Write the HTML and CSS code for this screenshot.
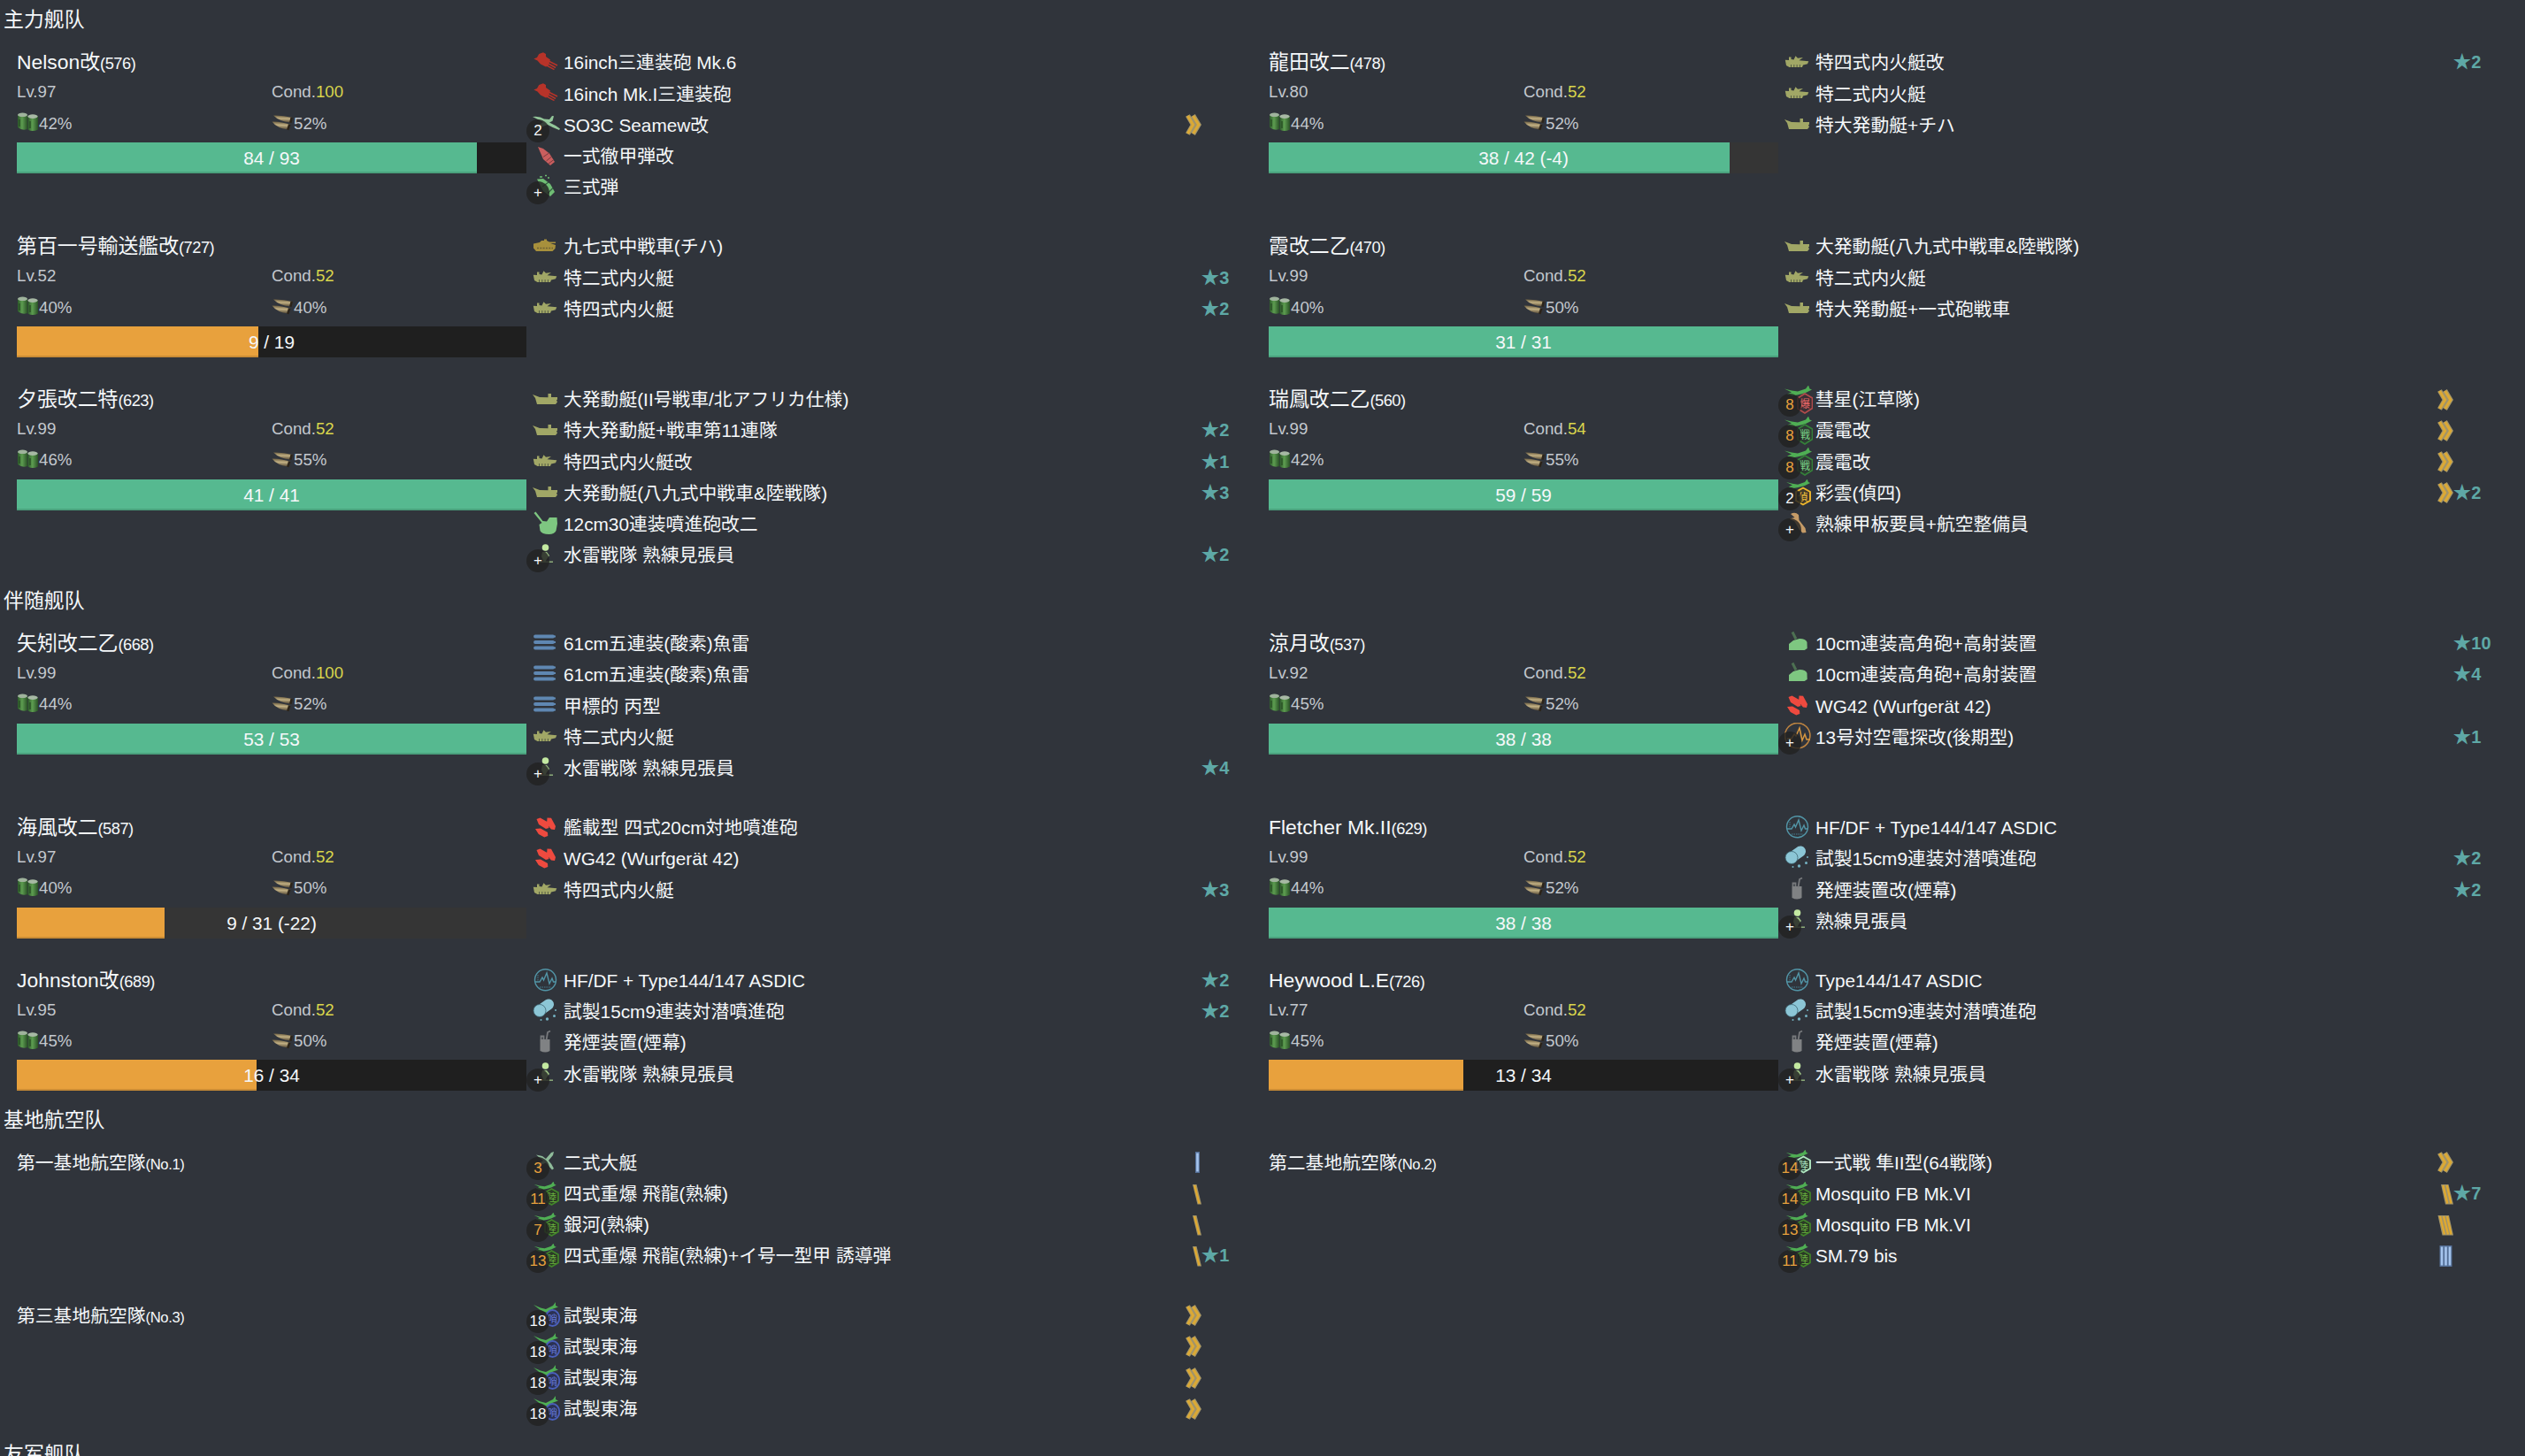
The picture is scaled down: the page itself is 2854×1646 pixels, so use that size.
FILE: index.html
```html
<!DOCTYPE html>
<html lang="ja">
<head>
<meta charset="utf-8">
<title>Fleet</title>
<link rel="stylesheet" href="styles.css">
</head>
<body>
<svg class="defs" width="0" height="0">
  <defs>
    <linearGradient id="g-can" x1="0" x2="1"><stop offset="0" stop-color="#2c5a2a"/><stop offset=".45" stop-color="#5d9d50"/><stop offset="1" stop-color="#2a5227"/></linearGradient>
    <linearGradient id="g-shell" x1=".1" y1="0" x2="0" y2="1"><stop offset="0" stop-color="#6d5f42"/><stop offset=".4" stop-color="#c2b083"/><stop offset="1" stop-color="#43392a"/></linearGradient>
  </defs>
  <symbol id="fuel" viewBox="0 0 25 22">
    <path d="M1 3v14q5 4 11 2V3z" fill="url(#g-can)"/><ellipse cx="6.5" cy="2.8" rx="5.5" ry="2.3" fill="#9fb39c"/>
    <path d="M12.500 5v14.500q5 3 11.500 0V5z" fill="url(#g-can)"/><ellipse cx="18" cy="4.600" rx="5.600" ry="2.400" fill="#a7b9a4"/>
    <path d="M3 8v8M15 10v8" stroke="#234820" stroke-width="1.200"/>
  </symbol>
  <symbol id="ammo" viewBox="0 0 25 22">
    <path d="M2 3.500Q12 3 23.500 6L21.500 11.500Q9 10.500 2 3.500z" fill="url(#g-shell)"/><path d="M.5 10.500Q10 10 21 14L19 19.500Q6 18 .5 10.500z" fill="url(#g-shell)"/>
    <path d="M21.500 5.500l2.500.600-1.500 6-2.500-.500zM19 13.300l2.500.900-2 6-2.500-.700z" fill="#2c241a"/>
  </symbol>
  <symbol id="gun" viewBox="0 0 32 32">
    <path d="M12 4.300 15 6v3l5 3.500-2.500 7L15 20.500 9 17.500 5.500 13.500 1.300 11.500 5 10 7.200 6z" fill="#b73329"/>
    <path d="M18 14l10 5M17 16.500l9 5M15 18.500l9.500 5.200" stroke="#b73329" stroke-width="1.500"/>
  </symbol>
  <symbol id="seaplane" viewBox="0 0 32 32">
    <path d="M0 7q8-1 13 2.500l6 .500 3-4 2 .300-1.500 5.500L19 13.500q7 3 12 7l-1 1.500q-8-3-13-6L6 20l-2-1 8-6q-6-3-12-6z" fill="#93c79a"/>
  </symbol>
  <symbol id="flyingboat" viewBox="0 0 32 32">
    <path d="M4 7.500l7 1.500 4 3 6-7 3-1-1 4-5 6q4 4 6 9l-2 1.500-7-8-9 4-1-1.500 7-5q-4-3-8-6.500z" fill="#8fbb9a"/>
  </symbol>
  <symbol id="apshell" viewBox="0 0 32 32">
    <path d="M6 5l6 2 7 5.500 6 9.500-5 4-8-7z" fill="#c95e5e"/><path d="M12 16.500l6.500-4.500M15.500 21l6-5M18 24l6-4.500" stroke="#7a3b3f" stroke-width="1"/>
  </symbol>
  <symbol id="aashell" viewBox="0 0 32 32">
    <path d="M5 6.500l7-.500 8 6 5 9-5 5-8-6z" fill="#6fbd74"/><path d="M11 15l7-5M17 22.500l6-6" stroke="#346040" stroke-width="1.200"/>
    <path d="M8 4h3M14 2.500h2M17 5h2" stroke="#6fbd74" stroke-width="1.600"/>
  </symbol>
  <symbol id="tank" viewBox="0 0 32 32">
    <path d="M1 12.500l7-1.500 2-2h3V7.500h3V9l3 1.500h7v1.500h-6l6 2-.500 4-3 3H4l-3-3.500z" fill="#a7903c"/><path d="M5 17.500h18" stroke="#6d6134" stroke-width="1.500" stroke-dasharray="2 1.300"/>
  </symbol>
  <symbol id="amphib" viewBox="0 0 32 32">
    <path d="M.8 12.700 5 13V9.500h2.500V12l3 .500 2-4.200 2.500 2.500 6-.800-4.500 3.200 10.800 1-1.300 3-5 1.300-1 2.500H5.500L2 19z" fill="#a1a766"/><path d="M7 19.500h12" stroke="#555d45" stroke-width="2.800" stroke-dasharray="1 2.300"/>
  </symbol>
  <symbol id="landing" viewBox="0 0 32 32">
    <path d="M0 10l8 3 9.500.300V9H21v4h7v2.500l-1 1 1 2-2 2.500H5L3 14z" fill="#a1a766"/>
  </symbol>
  <symbol id="rocket" viewBox="0 0 32 32">
    <path d="M1.500 4l2-1.500L11.500 13l4.500.500 3-4.500h8.500l.500 7-1.500 8q-2 4-8 4-8 0-10-4l-1-7 3-2z" fill="#7ec781"/>
  </symbol>
  <symbol id="crew" viewBox="0 0 32 32">
    <circle cx="14.500" cy="7" r="3.800" fill="#c3e9a1"/><path d="M11 12h5l3 4-3 4-1.500 3h-2L10 17z" fill="#9cc184"/><path d="M6 23.200h17" stroke="#8fae7b" stroke-width="1.500"/>
  </symbol>
  <symbol id="torpedo" viewBox="0 0 32 32">
    <path d="M3 7.500h20M3 14h20M3 20.500h20" stroke="#5f87b2" stroke-width="3.800" stroke-linecap="round"/><path d="M22 7.500h4M22 14h4M22 20.500h4" stroke="#5f87b2" stroke-width="2"/>
  </symbol>
  <symbol id="highangle" viewBox="0 0 32 32">
    <path d="M9 2.500l4 8" stroke="#4d7052" stroke-width="3"/><path d="M5 16l5-4 7-2q7 0 8.500 4l.200 7-3 2H5z" fill="#7ec781"/>
  </symbol>
  <symbol id="wurf" viewBox="0 0 32 32">
    <path d="M4.500 6l4-1.500 8 4.500 2 7-3.500 1-8-5zM16.500 4.500 21 4.800l5 9.200-1 4-4-.500-5-6zM3 17l6-.500 8 4.500.300 4-4 1.500-6.500-3.500z" fill="#ee4a3f"/>
  </symbol>
  <symbol id="radar" viewBox="0 0 32 32">
    <circle cx="14.700" cy="14.600" r="14.200" fill="none" stroke="#bd8441" stroke-width="1.600"/><path d="M3 18h5l3-5 2 2 4-9 3 14 3-7 2 6h4" fill="none" stroke="#d8973f" stroke-width="1.500"/>
  </symbol>
  <symbol id="sonar" viewBox="0 0 32 32">
    <circle cx="14.500" cy="14.800" r="12" fill="none" stroke="#5295a7" stroke-width="1.400"/><path d="M3 17h5l3-5 1.500 3L16 7l3 12 3-6 1.500 4H26" fill="none" stroke="#5295a7" stroke-width="1.400"/><path d="M8 23h13M6 9v7" stroke="#3e6675" stroke-width="1.400" stroke-dasharray="1.500 1"/>
  </symbol>
  <symbol id="depth" viewBox="0 0 32 32">
    <path d="M8 14.500 18 7.500" stroke="#8cc6d6" stroke-width="12" stroke-linecap="round"/><circle cx="8" cy="14.500" r="7" fill="#8cc6d6" stroke="#3c6370" stroke-width=".8"/>
    <g fill="#75b2c3"><circle cx="16.500" cy="24" r="1.700"/><circle cx="24.500" cy="20.500" r="1.500"/><circle cx="9.500" cy="25" r="1"/><circle cx="26" cy="14" r="1"/></g>
  </symbol>
  <symbol id="smoke" viewBox="0 0 32 32">
    <path d="M8.500 12h11v13q-5 3-11 0z" fill="#808284"/><path d="M15.500 13l1.500-9 3-1.500M9.500 12V8.500h3V12" fill="none" stroke="#77797c" stroke-width="1.800"/>
  </symbol>
  <symbol id="wrench" viewBox="0 0 32 32">
    <path d="M7 5q5-3 9 1l.500 6 7 9 1 5-4 .500-4-4-5-9-6-3 6-1.500z" fill="#c59b67"/>
  </symbol>
  <symbol id="jet" viewBox="0 0 32 32">
    <path d="M0 3.500l8 2 7 1 9-3 3-4 1.500 4 2.500 1-7 3.500-5 1.500L9 11.500 3 9.500l5-2z" fill="#4fae54"/>
  </symbol>
  <symbol id="bomber" viewBox="0 0 32 32">
    <use href="#jet"/><path d="M23 9l8.500 5v11.500L23 31l-8-5V14z" fill="#3a2f34" stroke="#b14b4b" stroke-width="1.700"/>
  </symbol>
  <symbol id="fighter" viewBox="0 0 32 32">
    <use href="#jet"/><path d="M23 9l8.500 5v11.500L23 31l-8-5V14z" fill="#2d3a33" stroke="#35803a" stroke-width="1.700"/>
  </symbol>
  <symbol id="recon" viewBox="0 0 32 32">
    <use href="#jet" x="2" y="1" width="28" height="28"/><path d="M21 10.500l8 4.500v10L21 29.500 13 25V15z" fill="#423b2a" stroke="#efb72d" stroke-width="1.900"/>
  </symbol>
  <symbol id="landplane" viewBox="0 0 32 32">
    <use href="#jet" x="1.500" y="2" width="26" height="26"/><path d="M21.500 10l7.500 4.200v9.300L21.500 28 14 23.500v-9.300z" fill="#2b3b26" stroke="#42852a" stroke-width="1.700"/>
  </symbol>
  <symbol id="landfighter" viewBox="0 0 32 32">
    <use href="#jet" x="1.500" y="2" width="26" height="26"/><path d="M21.500 9.500l7.500 4.200v9.300L21.500 27.500 14 23v-9.300z" fill="#2f4438" stroke="#b0e8c2" stroke-width="1.900"/>
  </symbol>
  <symbol id="patrol" viewBox="0 0 32 32">
    <path d="M1 4l8 3.500 6 1.500 8-4 3-4v4l3 1.500-7 2.500-6 4-8-3.500z" fill="#4fae54"/><ellipse cx="22.500" cy="19" rx="7.800" ry="9" fill="#2b3153" stroke="#4a5fbb" stroke-width="1.900"/>
  </symbol>
  <symbol id="p7" viewBox="0 0 18 24">
    <g fill="none"><path d="M2.500 1.500 8.500 12 2.500 22.500M8.500 1.500 14.800 12 8.500 22.500" stroke="#a1946a" stroke-width="5.500"/><path d="M2.500 2 8.500 12 2.500 22M8.700 2 14.800 12 8.700 22" stroke="#dba935" stroke-width="3.200"/></g>
  </symbol>
  <symbol id="p6" viewBox="0 0 18 24">
    <path d="M.5 1h12.500l5 22.500H5.500z" fill="#a1946a"/><path d="M3 2l5 20.500M7 2l5 20.500M11 2l4.500 20.500" stroke="#e0a92f" stroke-width="2.300"/>
  </symbol>
  <symbol id="p5" viewBox="0 0 18 24">
    <path d="M4 1h8.500l5.500 22.500H9z" fill="#a1946a"/><path d="M6.500 2l4.800 20.500M10.700 2l4.800 20.500" stroke="#e0a92f" stroke-width="2.300"/>
  </symbol>
  <symbol id="p4" viewBox="0 0 18 24">
    <path d="M8 1h4.500l5.500 22.500h-4.500z" fill="#a1946a"/><path d="M10.200 2l5.300 20.500" stroke="#e0a92f" stroke-width="2.300"/>
  </symbol>
  <symbol id="p3" viewBox="0 0 18 24">
    <path d="M2.500 0h14v24h-14z" fill="#546f97"/><path d="M5 1.500v21M9.500 1.500v21M14 1.500v21" stroke="#a5c5ee" stroke-width="2.600"/>
  </symbol>
  <symbol id="p1" viewBox="0 0 18 24">
    <path d="M11 0h5v24h-5z" fill="#546f97"/><path d="M13.500 1.500v21" stroke="#a5c5ee" stroke-width="2.600"/>
  </symbol>
</svg>

<main class="fleets">
<h2 class="title">主力舰队</h2>
<section class="grid">
  <article class="ship">
    <div class="info"><h3 class="who">Nelson改<small>(576)</small></h3>
      <div class="pair stat"><span>Lv.97</span><span>Cond.<i>100</i></span></div>
      <div class="pair supply"><span><svg><use href="#fuel"/></svg>42%</span><span><svg><use href="#ammo"/></svg>52%</span></div>
      <div class="hp"><div class="fill green" style="width:90.32%"></div><span>84 / 93</span></div></div>
    <ul class="items">
      <li><span class="icon"><svg><use href="#gun"/></svg></span><span class="name">16inch三連装砲 Mk.6</span></li>
      <li><span class="icon"><svg><use href="#gun"/></svg></span><span class="name">16inch Mk.I三連装砲</span></li>
      <li><span class="icon"><svg><use href="#seaplane"/></svg><b>2</b></span><span class="name">SO3C Seamew改</span><svg class="prof"><use href="#p7"/></svg></li>
      <li><span class="icon"><svg><use href="#apshell"/></svg></span><span class="name">一式徹甲弾改</span></li>
      <li><span class="icon"><svg><use href="#aashell"/></svg><b>+</b></span><span class="name">三式弾</span></li>
    </ul>
  </article>
  <article class="ship">
    <div class="info"><h3 class="who">龍田改二<small>(478)</small></h3>
      <div class="pair stat"><span>Lv.80</span><span>Cond.<i>52</i></span></div>
      <div class="pair supply"><span><svg><use href="#fuel"/></svg>44%</span><span><svg><use href="#ammo"/></svg>52%</span></div>
      <div class="hp hurt"><div class="fill green" style="width:90.48%"></div><span>38 / 42 (-4)</span></div></div>
    <ul class="items">
      <li><span class="icon"><svg><use href="#amphib"/></svg></span><span class="name">特四式内火艇改</span><span class="star">2</span></li>
      <li><span class="icon"><svg><use href="#amphib"/></svg></span><span class="name">特二式内火艇</span></li>
      <li><span class="icon"><svg><use href="#landing"/></svg></span><span class="name">特大発動艇+チハ</span></li>
    </ul>
  </article>
  <article class="ship">
    <div class="info"><h3 class="who">第百一号輸送艦改<small>(727)</small></h3>
      <div class="pair stat"><span>Lv.52</span><span>Cond.<i>52</i></span></div>
      <div class="pair supply"><span><svg><use href="#fuel"/></svg>40%</span><span><svg><use href="#ammo"/></svg>40%</span></div>
      <div class="hp"><div class="fill orange" style="width:47.37%"></div><span>9 / 19</span></div></div>
    <ul class="items">
      <li><span class="icon"><svg><use href="#tank"/></svg></span><span class="name">九七式中戦車(チハ)</span></li>
      <li><span class="icon"><svg><use href="#amphib"/></svg></span><span class="name">特二式内火艇</span><span class="star">3</span></li>
      <li><span class="icon"><svg><use href="#amphib"/></svg></span><span class="name">特四式内火艇</span><span class="star">2</span></li>
    </ul>
  </article>
  <article class="ship">
    <div class="info"><h3 class="who">霞改二乙<small>(470)</small></h3>
      <div class="pair stat"><span>Lv.99</span><span>Cond.<i>52</i></span></div>
      <div class="pair supply"><span><svg><use href="#fuel"/></svg>40%</span><span><svg><use href="#ammo"/></svg>50%</span></div>
      <div class="hp"><div class="fill green" style="width:100%"></div><span>31 / 31</span></div></div>
    <ul class="items">
      <li><span class="icon"><svg><use href="#landing"/></svg></span><span class="name">大発動艇(八九式中戦車&amp;陸戦隊)</span></li>
      <li><span class="icon"><svg><use href="#amphib"/></svg></span><span class="name">特二式内火艇</span></li>
      <li><span class="icon"><svg><use href="#landing"/></svg></span><span class="name">特大発動艇+一式砲戦車</span></li>
    </ul>
  </article>
  <article class="ship">
    <div class="info"><h3 class="who">夕張改二特<small>(623)</small></h3>
      <div class="pair stat"><span>Lv.99</span><span>Cond.<i>52</i></span></div>
      <div class="pair supply"><span><svg><use href="#fuel"/></svg>46%</span><span><svg><use href="#ammo"/></svg>55%</span></div>
      <div class="hp"><div class="fill green" style="width:100%"></div><span>41 / 41</span></div></div>
    <ul class="items">
      <li><span class="icon"><svg><use href="#landing"/></svg></span><span class="name">大発動艇(II号戦車/北アフリカ仕様)</span></li>
      <li><span class="icon"><svg><use href="#landing"/></svg></span><span class="name">特大発動艇+戦車第11連隊</span><span class="star">2</span></li>
      <li><span class="icon"><svg><use href="#amphib"/></svg></span><span class="name">特四式内火艇改</span><span class="star">1</span></li>
      <li><span class="icon"><svg><use href="#landing"/></svg></span><span class="name">大発動艇(八九式中戦車&amp;陸戦隊)</span><span class="star">3</span></li>
      <li><span class="icon"><svg><use href="#rocket"/></svg></span><span class="name">12cm30連装噴進砲改二</span></li>
      <li><span class="icon"><svg><use href="#crew"/></svg><b>+</b></span><span class="name">水雷戦隊 熟練見張員</span><span class="star">2</span></li>
    </ul>
  </article>
  <article class="ship">
    <div class="info"><h3 class="who">瑞鳳改二乙<small>(560)</small></h3>
      <div class="pair stat"><span>Lv.99</span><span>Cond.<i>54</i></span></div>
      <div class="pair supply"><span><svg><use href="#fuel"/></svg>42%</span><span><svg><use href="#ammo"/></svg>55%</span></div>
      <div class="hp"><div class="fill green" style="width:100%"></div><span>59 / 59</span></div></div>
    <ul class="items">
      <li><span class="icon"><svg><use href="#bomber"/></svg><em class="tag bomb">爆</em><b class="low">8</b></span><span class="name">彗星(江草隊)</span><svg class="prof"><use href="#p7"/></svg></li>
      <li><span class="icon"><svg><use href="#fighter"/></svg><em class="tag fight">戦</em><b class="low">8</b></span><span class="name">震電改</span><svg class="prof"><use href="#p7"/></svg></li>
      <li><span class="icon"><svg><use href="#fighter"/></svg><em class="tag fight">戦</em><b class="low">8</b></span><span class="name">震電改</span><svg class="prof"><use href="#p7"/></svg></li>
      <li><span class="icon"><svg><use href="#recon"/></svg><em class="tag scout">偵</em><b>2</b></span><span class="name">彩雲(偵四)</span><svg class="prof"><use href="#p7"/></svg><span class="star">2</span></li>
      <li><span class="icon"><svg><use href="#wrench"/></svg><b>+</b></span><span class="name">熟練甲板要員+航空整備員</span></li>
    </ul>
  </article>
</section>

<h2 class="title">伴随舰队</h2>
<section class="grid">
  <article class="ship">
    <div class="info"><h3 class="who">矢矧改二乙<small>(668)</small></h3>
      <div class="pair stat"><span>Lv.99</span><span>Cond.<i>100</i></span></div>
      <div class="pair supply"><span><svg><use href="#fuel"/></svg>44%</span><span><svg><use href="#ammo"/></svg>52%</span></div>
      <div class="hp"><div class="fill green" style="width:100%"></div><span>53 / 53</span></div></div>
    <ul class="items">
      <li><span class="icon"><svg><use href="#torpedo"/></svg></span><span class="name">61cm五連装(酸素)魚雷</span></li>
      <li><span class="icon"><svg><use href="#torpedo"/></svg></span><span class="name">61cm五連装(酸素)魚雷</span></li>
      <li><span class="icon"><svg><use href="#torpedo"/></svg></span><span class="name">甲標的 丙型</span></li>
      <li><span class="icon"><svg><use href="#amphib"/></svg></span><span class="name">特二式内火艇</span></li>
      <li><span class="icon"><svg><use href="#crew"/></svg><b>+</b></span><span class="name">水雷戦隊 熟練見張員</span><span class="star">4</span></li>
    </ul>
  </article>
  <article class="ship">
    <div class="info"><h3 class="who">涼月改<small>(537)</small></h3>
      <div class="pair stat"><span>Lv.92</span><span>Cond.<i>52</i></span></div>
      <div class="pair supply"><span><svg><use href="#fuel"/></svg>45%</span><span><svg><use href="#ammo"/></svg>52%</span></div>
      <div class="hp"><div class="fill green" style="width:100%"></div><span>38 / 38</span></div></div>
    <ul class="items">
      <li><span class="icon"><svg><use href="#highangle"/></svg></span><span class="name">10cm連装高角砲+高射装置</span><span class="star">10</span></li>
      <li><span class="icon"><svg><use href="#highangle"/></svg></span><span class="name">10cm連装高角砲+高射装置</span><span class="star">4</span></li>
      <li><span class="icon"><svg><use href="#wurf"/></svg></span><span class="name">WG42 (Wurfgerät 42)</span></li>
      <li><span class="icon"><svg><use href="#radar"/></svg><b>+</b></span><span class="name">13号対空電探改(後期型)</span><span class="star">1</span></li>
    </ul>
  </article>
  <article class="ship">
    <div class="info"><h3 class="who">海風改二<small>(587)</small></h3>
      <div class="pair stat"><span>Lv.97</span><span>Cond.<i>52</i></span></div>
      <div class="pair supply"><span><svg><use href="#fuel"/></svg>40%</span><span><svg><use href="#ammo"/></svg>50%</span></div>
      <div class="hp hurt"><div class="fill orange" style="width:29.03%"></div><span>9 / 31 (-22)</span></div></div>
    <ul class="items">
      <li><span class="icon"><svg><use href="#wurf"/></svg></span><span class="name">艦載型 四式20cm対地噴進砲</span></li>
      <li><span class="icon"><svg><use href="#wurf"/></svg></span><span class="name">WG42 (Wurfgerät 42)</span></li>
      <li><span class="icon"><svg><use href="#amphib"/></svg></span><span class="name">特四式内火艇</span><span class="star">3</span></li>
    </ul>
  </article>
  <article class="ship">
    <div class="info"><h3 class="who">Fletcher Mk.II<small>(629)</small></h3>
      <div class="pair stat"><span>Lv.99</span><span>Cond.<i>52</i></span></div>
      <div class="pair supply"><span><svg><use href="#fuel"/></svg>44%</span><span><svg><use href="#ammo"/></svg>52%</span></div>
      <div class="hp"><div class="fill green" style="width:100%"></div><span>38 / 38</span></div></div>
    <ul class="items">
      <li><span class="icon"><svg><use href="#sonar"/></svg></span><span class="name">HF/DF + Type144/147 ASDIC</span></li>
      <li><span class="icon"><svg><use href="#depth"/></svg></span><span class="name">試製15cm9連装対潜噴進砲</span><span class="star">2</span></li>
      <li><span class="icon"><svg><use href="#smoke"/></svg></span><span class="name">発煙装置改(煙幕)</span><span class="star">2</span></li>
      <li><span class="icon"><svg><use href="#crew"/></svg><b>+</b></span><span class="name">熟練見張員</span></li>
    </ul>
  </article>
  <article class="ship">
    <div class="info"><h3 class="who">Johnston改<small>(689)</small></h3>
      <div class="pair stat"><span>Lv.95</span><span>Cond.<i>52</i></span></div>
      <div class="pair supply"><span><svg><use href="#fuel"/></svg>45%</span><span><svg><use href="#ammo"/></svg>50%</span></div>
      <div class="hp"><div class="fill orange" style="width:47.06%"></div><span>16 / 34</span></div></div>
    <ul class="items">
      <li><span class="icon"><svg><use href="#sonar"/></svg></span><span class="name">HF/DF + Type144/147 ASDIC</span><span class="star">2</span></li>
      <li><span class="icon"><svg><use href="#depth"/></svg></span><span class="name">試製15cm9連装対潜噴進砲</span><span class="star">2</span></li>
      <li><span class="icon"><svg><use href="#smoke"/></svg></span><span class="name">発煙装置(煙幕)</span></li>
      <li><span class="icon"><svg><use href="#crew"/></svg><b>+</b></span><span class="name">水雷戦隊 熟練見張員</span></li>
    </ul>
  </article>
  <article class="ship">
    <div class="info"><h3 class="who">Heywood L.E<small>(726)</small></h3>
      <div class="pair stat"><span>Lv.77</span><span>Cond.<i>52</i></span></div>
      <div class="pair supply"><span><svg><use href="#fuel"/></svg>45%</span><span><svg><use href="#ammo"/></svg>50%</span></div>
      <div class="hp"><div class="fill orange" style="width:38.24%"></div><span>13 / 34</span></div></div>
    <ul class="items">
      <li><span class="icon"><svg><use href="#sonar"/></svg></span><span class="name">Type144/147 ASDIC</span></li>
      <li><span class="icon"><svg><use href="#depth"/></svg></span><span class="name">試製15cm9連装対潜噴進砲</span></li>
      <li><span class="icon"><svg><use href="#smoke"/></svg></span><span class="name">発煙装置(煙幕)</span></li>
      <li><span class="icon"><svg><use href="#crew"/></svg><b>+</b></span><span class="name">水雷戦隊 熟練見張員</span></li>
    </ul>
  </article>
</section>

<h2 class="title">基地航空队</h2>
<section class="grid">
  <article class="ship">
    <div class="info"><h3 class="who base">第一基地航空隊<small>(No.1)</small></h3></div>
    <ul class="items">
      <li><span class="icon"><svg><use href="#flyingboat"/></svg><b class="low">3</b></span><span class="name">二式大艇</span><svg class="prof"><use href="#p1"/></svg></li>
      <li><span class="icon"><svg><use href="#landplane"/></svg><em class="tag land">陸</em><b class="low">11</b></span><span class="name">四式重爆 飛龍(熟練)</span><svg class="prof"><use href="#p4"/></svg></li>
      <li><span class="icon"><svg><use href="#landplane"/></svg><em class="tag land">陸</em><b class="low">7</b></span><span class="name">銀河(熟練)</span><svg class="prof"><use href="#p4"/></svg></li>
      <li><span class="icon"><svg><use href="#landplane"/></svg><em class="tag land">陸</em><b class="low">13</b></span><span class="name">四式重爆 飛龍(熟練)+イ号一型甲 誘導弾</span><svg class="prof"><use href="#p4"/></svg><span class="star">1</span></li>
    </ul>
  </article>
  <article class="ship">
    <div class="info"><h3 class="who base">第二基地航空隊<small>(No.2)</small></h3></div>
    <ul class="items">
      <li><span class="icon"><svg><use href="#landfighter"/></svg><em class="tag land pale">陸</em><b class="low">14</b></span><span class="name">一式戦 隼II型(64戦隊)</span><svg class="prof"><use href="#p7"/></svg></li>
      <li><span class="icon"><svg><use href="#landplane"/></svg><em class="tag land">陸</em><b class="low">14</b></span><span class="name">Mosquito FB Mk.VI</span><svg class="prof"><use href="#p5"/></svg><span class="star">7</span></li>
      <li><span class="icon"><svg><use href="#landplane"/></svg><em class="tag land">陸</em><b class="low">13</b></span><span class="name">Mosquito FB Mk.VI</span><svg class="prof"><use href="#p6"/></svg></li>
      <li><span class="icon"><svg><use href="#landplane"/></svg><em class="tag land">陸</em><b class="low">11</b></span><span class="name">SM.79 bis</span><svg class="prof"><use href="#p3"/></svg></li>
    </ul>
  </article>
  <article class="ship">
    <div class="info"><h3 class="who base">第三基地航空隊<small>(No.3)</small></h3></div>
    <ul class="items">
      <li><span class="icon"><svg><use href="#patrol"/></svg><em class="tag watch">哨</em><b>18</b></span><span class="name">試製東海</span><svg class="prof"><use href="#p7"/></svg></li>
      <li><span class="icon"><svg><use href="#patrol"/></svg><em class="tag watch">哨</em><b>18</b></span><span class="name">試製東海</span><svg class="prof"><use href="#p7"/></svg></li>
      <li><span class="icon"><svg><use href="#patrol"/></svg><em class="tag watch">哨</em><b>18</b></span><span class="name">試製東海</span><svg class="prof"><use href="#p7"/></svg></li>
      <li><span class="icon"><svg><use href="#patrol"/></svg><em class="tag watch">哨</em><b>18</b></span><span class="name">試製東海</span><svg class="prof"><use href="#p7"/></svg></li>
    </ul>
  </article>
</section>
<h2 class="title">友军舰队</h2>
</main>
</body>
</html>
```
FILE: styles.css
```css
* { box-sizing: border-box; }
html, body { height: 1646px; overflow: hidden; }
body {
  margin: 0;
  background: #30343b;
  color: #f5f8fa;
  font: 20.8px "Liberation Sans", "Noto Sans CJK JP", sans-serif;
}
.defs { position: absolute; }
.fleets { width: 2838px; padding: 4.4px 4px 0; }
.title {
  margin: 0;
  height: 33px;
  font: 400 22.88px/36px "Liberation Sans", "Noto Sans CJK SC", sans-serif;
  white-space: nowrap;
}
.grid { display: grid; grid-template-columns: 1415px 1415px; }
.ship { display: grid; grid-template-columns: 576px 1fr; padding: 16px 15px; }

.info { display: flex; flex-direction: column; height: 140.8px; }
.info > * { flex-shrink: 0; }
.who { margin: 0; height: 35.2px; font-size: 22.88px; font-weight: 400; line-height: 35.2px; white-space: nowrap; }
.who small { font-size: 18.3px; letter-spacing: -.5px; }
.who.base { font-size: 20.8px; }
.who.base small { font-size: 16.64px; letter-spacing: -.4px; }
.pair { display: grid; grid-template-columns: 1fr 1fr; align-items: center; color: #c3c8ce; font-size: 18.7px; }
.stat { height: 31px; }
.stat i { font-style: normal; color: #d9d64c; }
.supply { height: 40px; }
.supply span { display: flex; align-items: center; }
.supply svg { width: 25px; height: 22px; margin-top: -3px; }
.hp {
  display: grid;
  margin-top: 1.3px;
  height: 35px;
  background: #1f1f1f;
  line-height: 35px;
}
.hp > * { grid-area: 1 / 1; }
.hp > span { text-align: center; }
.hp.hurt { background: #353535; }
.fill { box-shadow: inset 0 -2px rgba(0, 0, 0, .13); }
.green { background: #56b990; }
.orange { background: #e8a13d; }

.items { margin: 0; padding: 0; list-style: none; min-height: 140.8px; }
.items li {
  display: grid;
  grid-template-columns: 7px 35px 1fr 18px 46.5px;
  align-items: center;
  height: 35.2px;
  white-space: nowrap;
}
.icon { grid-column: 2; position: relative; height: 32px; }
.icon svg { display: block; width: 32px; height: 32px; overflow: visible; }
.icon b {
  position: absolute;
  left: -7px;
  top: 9.500px;
  width: 26px;
  height: 26px;
  border-radius: 50%;
  background: rgba(34, 34, 34, .82);
  font-size: 17px;
  font-weight: 400;
  line-height: 26px;
  text-align: center;
}
.icon b.low { color: #e8a13d; }
.tag {
  position: absolute;
  left: 15px;
  top: 12px;
  width: 16px;
  font: 12px/16px "Noto Sans CJK JP", sans-serif;
  text-align: center;
}
.tag.bomb { color: #e76565; }
.tag.fight { color: #77cf83; }
.tag.scout { left: 13px; font-size: 11px; color: #f4c23c; }
.tag.land { left: 13.500px; top: 11px; font-size: 11px; color: #69b23e; }
.tag.land.pale { color: #b0e8c2; }
.tag.watch { left: 14.500px; top: 11px; font-size: 11px; color: #6479dc; }
.name { grid-column: 3; height: 35.2px; line-height: 35px; }
.prof { grid-column: 4; width: 18px; height: 24px; }
.star { grid-column: 5; height: 35.2px; color: #5ea8a6; font-size: 20px; font-weight: 700; line-height: 34px; }
.star::before { content: "★"; font-family: "Noto Sans CJK JP", sans-serif; font-size: 20.8px; font-weight: 400; line-height: 1; }
```
